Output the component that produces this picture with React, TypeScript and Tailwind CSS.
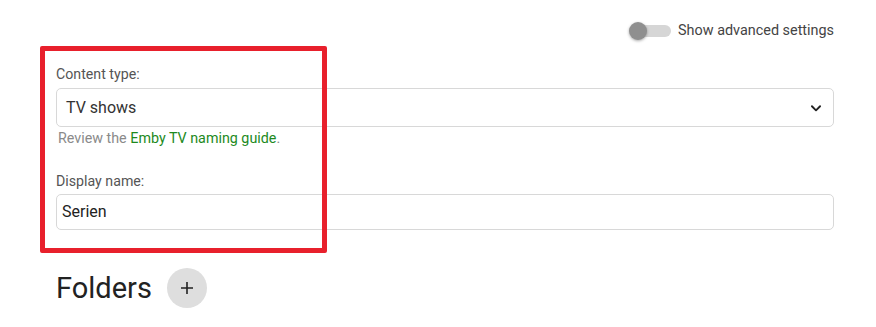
import React from 'react';

const App: React.FC = () => {
  return (
    <div
      className="relative w-[876px] h-[327px] bg-white overflow-hidden"
      style={{ fontFamily: 'Roboto, "Noto Sans", Arial, sans-serif' }}
    >
      <div className="pl-[56px] pr-[42px] pt-[21px]">
        <div className="flex h-5 items-center justify-end">
          <div className="relative flex h-5 w-[42px] items-center">
            <div className="ml-[2px] h-[12px] w-[40px] rounded-full bg-[#d6d6d6]" />
            <div className="absolute left-0 top-[1px] h-[18px] w-[18px] rounded-full bg-[#8f8f8f] shadow-[0_1px_3px_rgba(0,0,0,0.35)]" />
          </div>
          <span className="ml-[7px] text-[14.4px] text-[#444]">Show advanced settings</span>
        </div>

        <div className="mt-[25px] text-[14.2px] leading-4 text-[#555]">Content type:</div>
        <div className="mt-[6px] flex h-[39px] items-center justify-between rounded-[5px] border border-[#d8d8d8] pl-[9px] pr-[10px]">
          <span className="text-[16px] text-[#333]">TV shows</span>
          <svg width="14" height="14" viewBox="0 0 24 24" fill="none" stroke="#222" strokeWidth="3.2" strokeLinecap="round" strokeLinejoin="round">
            <path d="M5 9l7 7 7-7" />
          </svg>
        </div>
        <div className="mt-[3px] pl-[2px] text-[14.3px] leading-4 text-[#8a8a8a]">
          Review the <span className="text-[#1d8a1d]">Emby TV naming guide</span>.
        </div>

        <div className="mt-[27px] text-[14.2px] leading-4 text-[#555]">Display name:</div>
        <div className="mt-[5px] flex h-[36px] items-center rounded-[5px] border border-[#d8d8d8] pl-[5px]">
          <span className="text-[16px] text-[#222]">Serien</span>
        </div>

        <div className="mt-[38px] flex items-center gap-[15px]">
          <h2 className="text-[29px] font-normal leading-[40px] text-[#222]">Folders</h2>
          <button className="flex h-10 w-10 items-center justify-center rounded-full bg-[#dedede]">
            <svg width="16" height="16" viewBox="0 0 16 16" fill="none" stroke="#222" strokeWidth="1.6">
              <path d="M8 2v12M2 8h12" />
            </svg>
          </button>
        </div>
      </div>

      <div className="pointer-events-none absolute left-[40px] top-[46px] h-[207px] w-[287px] rounded-[2px] border-[5px] border-[#e8202c]" />
    </div>
  );
};

export default App;
